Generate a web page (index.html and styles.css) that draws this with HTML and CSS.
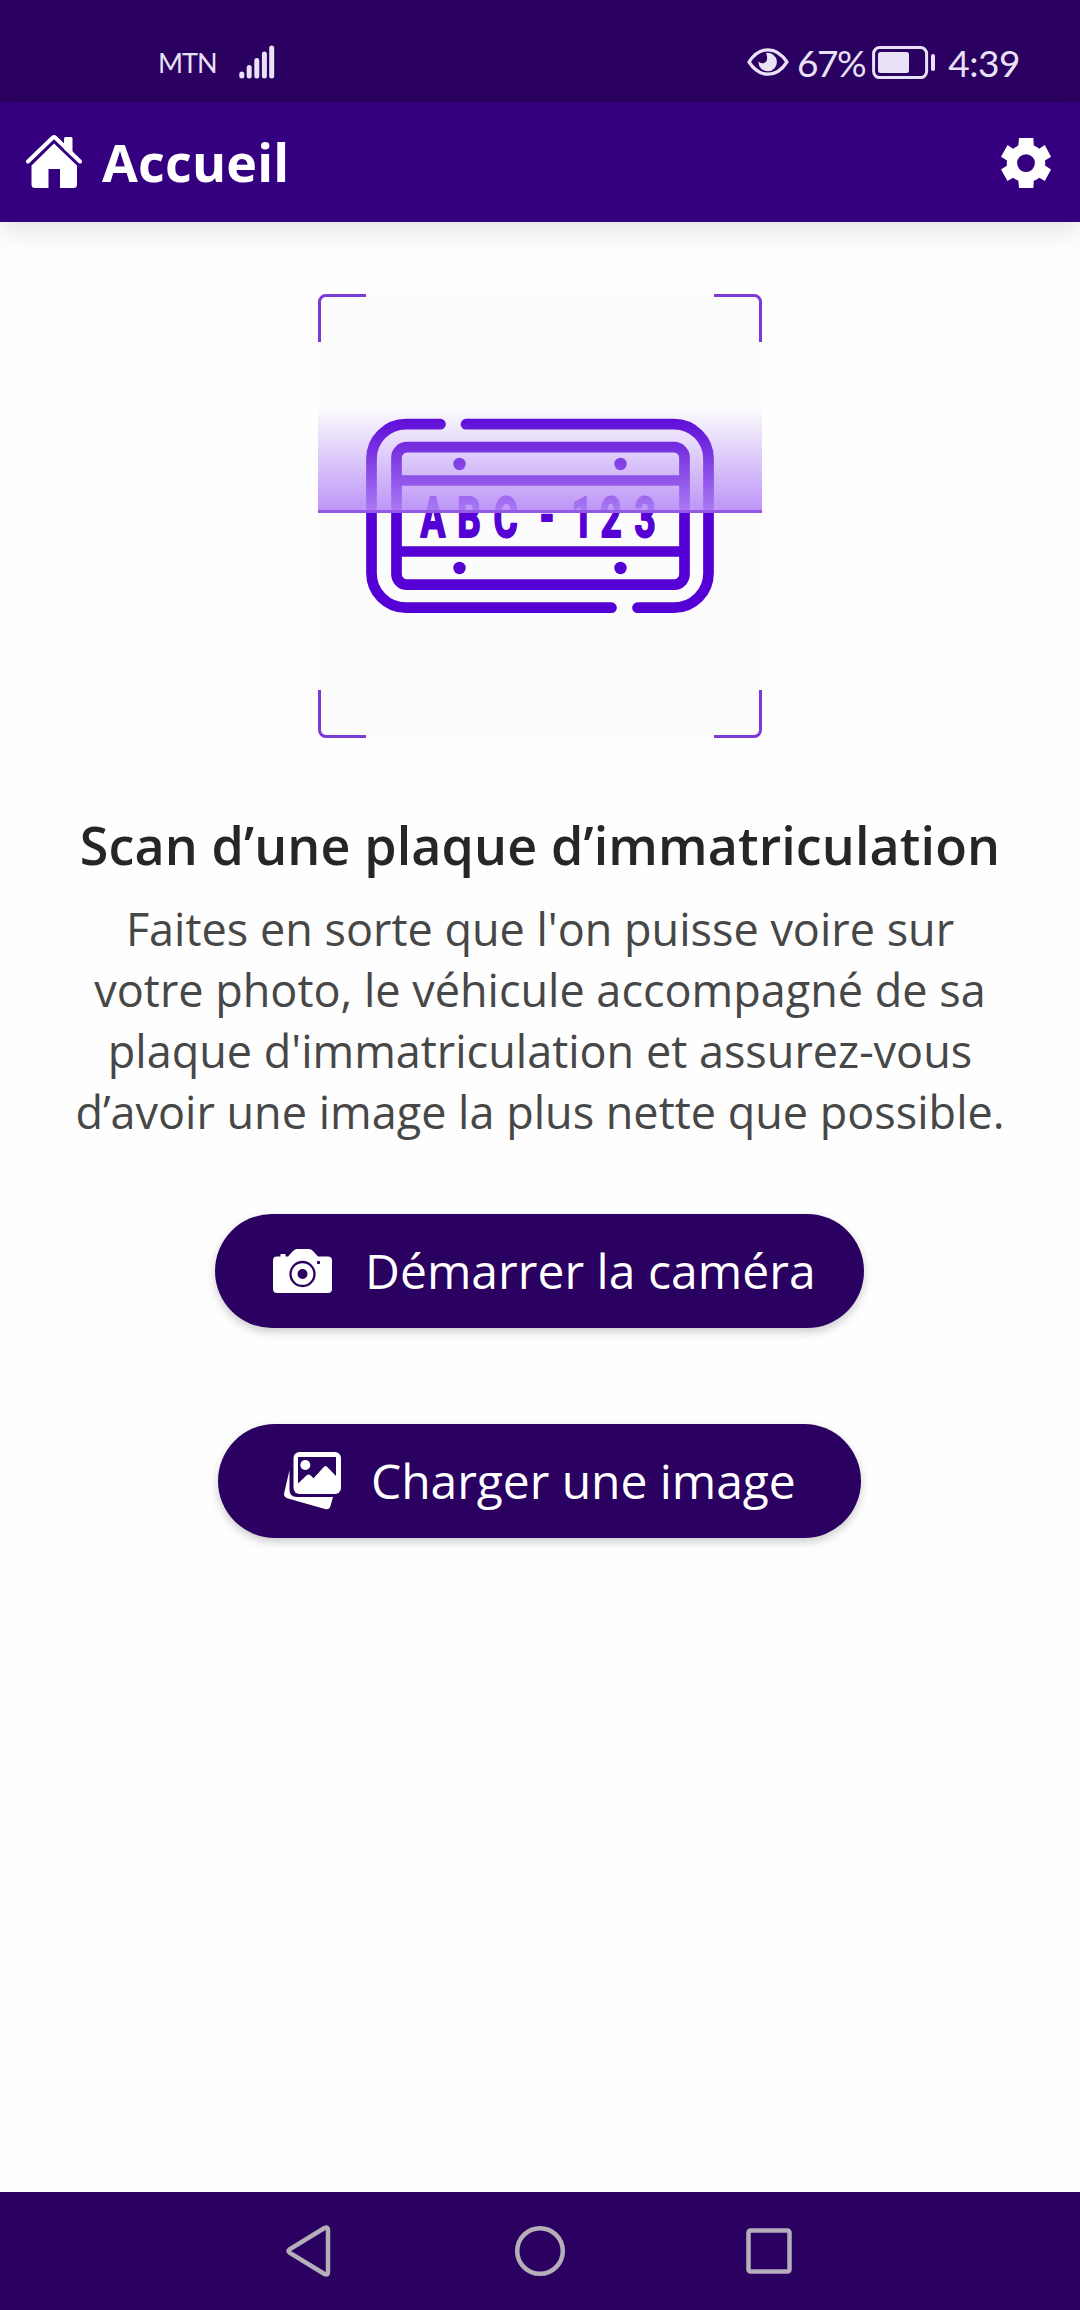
FILE: index.html
```html
<!DOCTYPE html>
<html lang="fr">
<head>
<meta charset="utf-8">
<title>Accueil</title>
<link rel="stylesheet" href="styles.css">
</head>
<body>
<div class="app">
  <div class="status">
    <span class="carrier">MTN</span>
    <svg class="signal" width="36" height="34" viewBox="0 0 36 34" fill="none" stroke="#e9e1f5" stroke-width="5" stroke-linecap="round"><path d="M2.8 29v2M10.2 22.500v8.500M17.800 15.500V31M25.400 9v22M32.700 3v28"/></svg>
    <svg class="eye" width="42" height="28" viewBox="0 0 42 28"><path d="M2 14Q10 1.800 21 1.800T40 14Q32 26.200 21 26.200T2 14Z" fill="none" stroke="#e9e1f5" stroke-width="3.200" stroke-linejoin="round"/><path d="M19 5A9.200 9.200 0 1 1 11.500 13.500Q13.500 16 17 15Q22 13 19 5Z" fill="#e9e1f5"/></svg>
    <span class="percent">67%</span>
    <svg class="battery" width="64" height="34" viewBox="0 0 64 34"><rect x="1.600" y="1.600" width="53" height="30" rx="6" fill="none" stroke="#e9e1f5" stroke-width="3"/><rect x="6" y="6" width="31" height="21" rx="2.500" fill="#e9e1f5"/><rect x="59" y="8" width="4" height="17" rx="2" fill="#e9e1f5"/></svg>
    <span class="clock">4:39</span>
  </div>
  <header class="header">
    <svg class="home" width="56" height="54" viewBox="0 0 56 54"><path d="M38 12V3.500Q38 2 39.500 2H45Q46.500 2 46.500 3.500V22L38 14Z" fill="#fff"/><path d="M2 26.500 26.600 2.800Q28 1.600 29.400 2.800L54 26.500" fill="none" stroke="#fff" stroke-width="4" stroke-linecap="round"/><path d="M28 8.500 51 30.500V49.500Q51 53 47.500 53H34V34H22.500V53H9Q5.500 53 5.500 49.500V30.500Z" fill="#fff"/></svg>
    <h1 class="title">Accueil</h1>
    <svg class="gear" width="50" height="50" viewBox="0 0 50 50"><path fill="#fff" fill-rule="evenodd" d="M18 0H32.300L32.800 7.500Q36 8.800 38.300 10.800L43.800 7 50 18.800 44 22.500Q44.500 25 44 27.500L50 31.500 43.800 43 38.300 39.700Q36 41.500 32.800 42.800L32.300 50H18L17.300 42.800Q14.500 41.500 12 39.700L6.500 43 0 31.500 6 27.500Q5.500 25 6 22.500L0 18.800 6.500 7 12 10.800Q14.500 8.800 17.300 7.500ZM25 16.200A8.900 8.900 0 1 0 25 34A8.900 8.900 0 1 0 25 16.200Z"/></svg>
  </header>
  <main class="main">
    <svg class="scan" width="444" height="444" viewBox="0 0 444 444">
      <defs>
        <linearGradient id="beam" x1="0" y1="0" x2="0" y2="1">
          <stop offset="0" stop-color="#b588f7" stop-opacity="0"/>
          <stop offset="1" stop-color="#b588f7" stop-opacity=".88"/>
        </linearGradient>
      </defs>
      <rect width="444" height="444" fill="#fcfcfc"/>
      <g fill="none" stroke="#5500d4" stroke-width="10.700">
        <path stroke-linecap="round" d="M122.500 130.200H88A34.500 34.500 0 0 0 53.500 164.700V279A34.500 34.500 0 0 0 88 313.700H293.500M319.500 313.700H356A34.500 34.500 0 0 0 390.500 279V164.700A34.500 34.500 0 0 0 356 130.200H148"/>
        <rect x="78.500" y="153.200" width="288" height="137.500" rx="10.500"/>
        <path d="M79 186.500H366M79 257.500H366"/>
      </g>
      <g fill="#5500d4">
        <circle cx="141.500" cy="170" r="6.200"/><circle cx="302.500" cy="170" r="6.200"/>
        <circle cx="141.500" cy="274" r="6.200"/><circle cx="302.500" cy="274" r="6.200"/>
      </g>
      <text class="plate" transform="translate(0 243.200) scale(.66 1)" x="174.100 229 284.100 347 400 444 495.500" y="0 0 0 -2 0 0 0" text-anchor="middle">ABC-123</text>
      <rect y="113" width="444" height="103" fill="url(#beam)"/>
      <rect y="216" width="444" height="3" fill="#9358e6"/>
      <path fill="none" stroke="#7c3ad6" stroke-width="3" d="M1.500 48V8A6.500 6.500 0 0 1 8 1.500H48M396 1.500H436A6.500 6.500 0 0 1 442.500 8V48M442.500 396V436A6.500 6.500 0 0 1 436 442.500H396M48 442.500H8A6.500 6.500 0 0 1 1.500 436V396"/>
    </svg>
    <h2 class="heading">Scan d’une plaque d’immatriculation</h2>
    <p class="text">Faites en sorte que l'on puisse voire sur<br>votre photo, le véhicule accompagné de sa<br>plaque d'immatriculation et assurez-vous<br>d’avoir une image la plus nette que possible.</p>
    <button class="btn btn-camera">
      <svg class="camera" width="60" height="44" viewBox="0 0 60 44"><path fill="#fff" d="M4 7.500H7.500V5H12.500V7.500H15L20 2Q22 0 24 0H36Q38 0 40 2L45 7.500H55Q59 7.500 59 11.500V40Q59 44 55 44H4Q0 44 0 40V11.500Q0 7.500 4 7.500Z"/><circle cx="29.500" cy="25" r="12" fill="none" stroke="#2a0060" stroke-width="2.300"/><circle cx="29.500" cy="25" r="5" fill="#2a0060"/><rect x="44" y="12" width="3" height="3" rx=".7" fill="#2a0060"/></svg>
      <span class="label">Démarrer la caméra</span>
    </button>
    <button class="btn btn-upload">
      <svg class="images" width="57" height="58" viewBox="0 0 57 58"><path fill="#fff" d="M5.500 18V38Q5.500 45 13 45H49L46.500 54Q45.300 58 41 57L4 46.500Q-1 45 .3 40.500Z"/><rect x="9.500" y="0" width="47.500" height="42" rx="6" fill="#fff"/><path fill="#2a0060" d="M14 5H52V24L43 14.700Q41.500 13.500 40 14.700L29.500 26.300 26.500 23.300Q24.500 21.700 22.700 23.300L14 31.500Z"/><circle cx="21.300" cy="13" r="5" fill="#fff"/></svg>
      <span class="label">Charger une image</span>
    </button>
  </main>
  <nav class="nav">
    <svg width="540" height="60" viewBox="0 0 540 60" fill="none" stroke="#b5afba" stroke-width="4.500" stroke-linejoin="round"><path d="M19.500 28.400 54.500 7Q58 5.500 58 9V51Q58 54.500 54.500 53L19.500 31.600Q17.500 30 19.500 28.400Z"/><circle cx="270" cy="30" r="22.800"/><rect x="478.500" y="9.500" width="41" height="41" rx="2"/></svg>
  </nav>
</div>
</body>
</html>
```

FILE: styles.css
```css
* { box-sizing: border-box; }
body { margin: 0; background: #fefefe; font-family: "Open Sans", sans-serif; }
svg { display: block; flex: none; }
.app { display: flex; flex-direction: column; width: 1080px; height: 2310px; }
.status { display: flex; align-items: flex-start; height: 102px; padding: 44px 60px 0 158px; background: #2a0060; color: #e9e1f5; font-family: Lato, sans-serif; white-space: nowrap; }
.carrier { width: 82px; padding-top: 1px; font-size: 27px; line-height: 36px; letter-spacing: -1px; }
.signal { margin: 1px 472px 0 0; }
.eye { margin: 4px 9px 0 0; }
.signal, .eye { transform: translateX(1px); }
.percent { width: 74px; font-size: 37px; line-height: 38px; letter-spacing: -1.5px; }
.battery { margin: 2px 12px 0 3px; }
.clock { font-size: 37px; line-height: 38px; letter-spacing: -.5px; }
.header { position: relative; display: flex; align-items: flex-start; height: 120px; padding: 33px 29px 0 26px; background: #340080; box-shadow: 0 6px 28px rgba(0, 0, 0, .13); }
.title { flex: 1; margin: -2px 0 0 20px; color: #fff; font-size: 52px; line-height: 58px; font-weight: 700; letter-spacing: .2px; }
.gear { margin: 3px 0 0; }
.main { display: flex; flex: 1; flex-direction: column; align-items: center; padding-top: 72px; }
.plate { font: 700 56px Roboto, sans-serif; fill: #5500d4; stroke: #5500d4; stroke-width: 2px; stroke-linejoin: round; }
.heading { margin: 72px 0 0; color: #262626; font-size: 52px; line-height: 70px; font-weight: 600; letter-spacing: .12px; white-space: nowrap; }
.text { margin: 18px 0 0; color: #474747; font-size: 45px; line-height: 61px; text-align: center; white-space: nowrap; }
.btn { display: flex; align-items: center; height: 114px; margin-right: 1px; padding: 0; border: 0; border-radius: 57px; background: #2a0060; color: #fff; font: 400 48px "Open Sans", sans-serif; white-space: nowrap; box-shadow: 0 4px 10px rgba(0, 0, 0, .2); }
.label { padding-bottom: 2px; }
.btn-camera { width: 649px; margin-top: 72px; padding-left: 58px; gap: 32px; letter-spacing: .05px; }
.btn-upload { width: 643px; margin-top: 96px; padding-left: 66px; gap: 30px; letter-spacing: -.05px; }
.nav { display: flex; align-items: center; justify-content: center; height: 118px; background: #2a0060; }
```
